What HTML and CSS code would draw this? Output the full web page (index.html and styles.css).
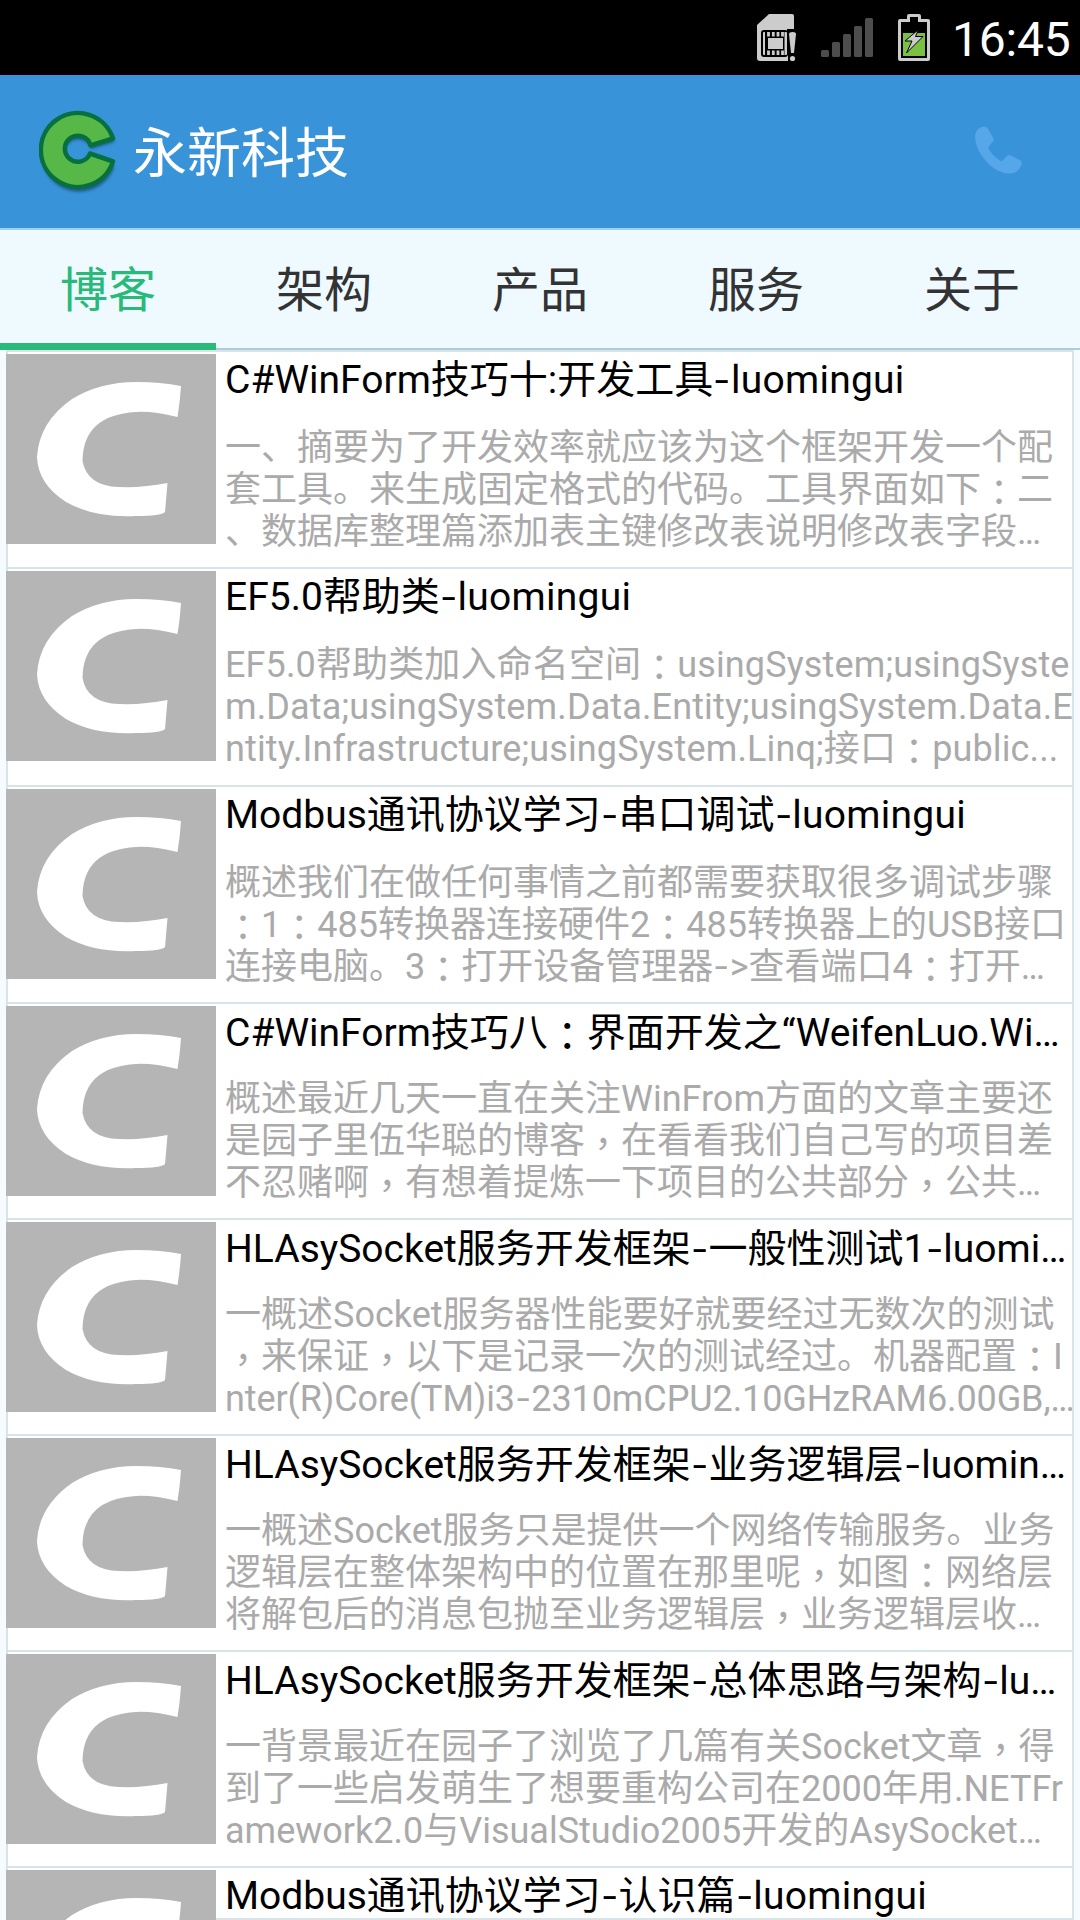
FILE: index.html
```html
<!DOCTYPE html>
<html lang="zh-CN">
<head>
<meta charset="utf-8">
<title>永新科技</title>
<link rel="stylesheet" href="styles.css">
</head>
<body>
<svg width="0" height="0" class="defs" aria-hidden="true">
  <symbol id="thumb" viewBox="0 0 210 190">
    <rect width="210" height="190" fill="#b5b5b5"/>
    <path fill="#fff" d="M175 32Q174 48 171.500 63Q147 57 130 58Q77 61 76.500 107Q81 132 113 133Q136 134 161.500 129L159 158Q155 162 130 162Q88 164 60 148Q32 130 31 103Q33 68 66 45Q94 28 130 28Q155 28 175 32Z"/>
  </symbol>
</svg>

<div class="statusbar">
  <svg class="sim" viewBox="0 0 40 48">
    <path fill="#ccc" d="M12 0H35Q37 0 37 2V47H3Q0 47 0 44V11Z"/>
    <rect x="4" y="16" width="27" height="27" rx="3" fill="#000"/>
    <rect x="6" y="18" width="24" height="23" rx="1" fill="#ccc"/>
    <rect x="8" y="18" width="19.500" height="23" fill="#000"/>
    <path stroke="#ccc" stroke-width="2.800" d="M11.500 18v4.500M16.300 18v4.500M21 18v4.500M25.500 18v4.500M11.500 36.500V41M16.300 36.500V41M21 36.500V41M25.500 36.500V41"/>
    <rect x="11" y="24" width="15" height="11" fill="#ccc"/>
    <path fill="#000" d="M30 15H40V48H31V41L30 22Z"/>
    <path fill="#ccc" d="M32 20q0-2 3.500-2t3.500 2l-2 19h-3z"/>
    <circle cx="35.500" cy="44.500" r="2.600" fill="#ccc"/>
  </svg>
  <svg class="signal" viewBox="0 0 52 40" fill="#4d4d4d">
    <rect x="0" y="32" width="8" height="7" rx="1.500"/><rect x="11" y="24" width="8" height="15" rx="1.500"/><rect x="22" y="16" width="8" height="23" rx="1.500"/><rect x="33" y="8" width="8" height="31" rx="1.500"/><rect x="44" y="0" width="8" height="39" rx="1.500"/>
  </svg>
  <svg class="battery" viewBox="0 0 32 47">
    <path fill="#ccc" d="M11 0H21Q23 0 23 2V5H30Q32 5 32 7V45Q32 47 30 47H2Q0 47 0 45V7Q0 5 2 5H9V2Q9 0 11 0Z"/>
    <path fill="#000" d="M12 3H20V8H29V44H3V8H12Z"/>
    <rect x="5" y="19" width="22" height="23" fill="#7ac143"/>
    <path fill="#ccc" stroke="#000" stroke-width="1" d="M20.500 15.500L7 27H14L8.500 39L25 22.500H17.500Z"/>
  </svg>
  <span class="clock">16:45</span>
</div>

<header class="header">
  <svg class="logo" viewBox="0 0 84 88">
    <path class="shadow" d="M75.500 31A37.500 37.500 0 1 0 75.500 55.500L52 46A13.500 13.500 0 1 1 52 38Z"/>
    <path fill="#57b847" stroke="#07703f" stroke-width="4.500" stroke-linejoin="round" d="M74 29.500A37 37 0 1 0 74 52.500L51 44.500A13 13 0 1 1 51.500 36.500Z"/>
  </svg>
  <h1>永新科技</h1>
  <svg class="phone" viewBox="0 0 47 48"><path fill="#56a7ea" d="M6.500 1Q10-.5 12.500 2L18.500 12.500Q19 14 18 15.500L13 21.500Q17 30 26.500 35.500L32 30Q33.500 28.500 35 29L45.500 34.500Q47.500 36 46.500 39Q43 48 34 47.500Q20 47 8 31.500Q-1 19.500 .3 8.500Q1.500 3 6.500 1Z"/></svg>
</header>

<nav class="tabs">
  <a class="tab active">博客</a><a class="tab">架构</a><a class="tab">产品</a><a class="tab">服务</a><a class="tab">关于</a>
</nav>

<main class="list">
  <article class="row h217">
    <svg class="thumb"><use href="#thumb"/></svg>
    <div class="text"><h2>C#WinForm技巧十:开发工具<b>-</b><em>luomingui</em></h2>
    <p><span>一、摘要为了开发效率就应该为这个框架开发一个配</span><span>套工具。来生成固定格式的代码。工具界面如下<i lang="zh-Hant">：</i>二</span><span>、数据库整理篇添加表主键修改表说明修改表字段…</span></p></div>
  </article>
  <article class="row h218">
    <svg class="thumb"><use href="#thumb"/></svg>
    <div class="text"><h2>EF5.0帮助类<b>-</b><em>luomingui</em></h2>
    <p class="latin"><span>EF5.0帮助类加入命名空间<i lang="zh-Hant">：</i>usingSystem;usingSyste</span><span>m.Data;usingSystem.Data.Entity;usingSystem.Data.E</span><span>ntity.Infrastructure;usingSystem.Linq;接口<i lang="zh-Hant">：</i>public...</span></p></div>
  </article>
  <article class="row h217">
    <svg class="thumb"><use href="#thumb"/></svg>
    <div class="text"><h2>Modbus通讯协议学习<b>-</b>串口调试<b>-</b><em>luomingui</em></h2>
    <p><span>概述我们在做任何事情之前都需要获取很多调试步骤</span><span><i lang="zh-Hant">：</i>1<i lang="zh-Hant">：</i>485转换器连接硬件2<i lang="zh-Hant">：</i>485转换器上的USB接口</span><span>连接电脑。3<i lang="zh-Hant">：</i>打开设备管理器<b>-</b>&gt;查看端口4<i lang="zh-Hant">：</i>打开…</span></p></div>
  </article>
  <article class="row">
    <svg class="thumb"><use href="#thumb"/></svg>
    <div class="text"><h2>C#WinForm技巧八<i lang="zh-Hant">：</i>界面开发之“WeifenLuo.Wi…</h2>
    <p><span>概述最近几天一直在关注WinFrom方面的文章主要还</span><span>是园子里伍华聪的博客<i lang="zh-Hant">，</i>在看看我们自己写的项目差</span><span>不忍赌啊<i lang="zh-Hant">，</i>有想着提炼一下项目的公共部分<i lang="zh-Hant">，</i>公共…</span></p></div>
  </article>
  <article class="row">
    <svg class="thumb"><use href="#thumb"/></svg>
    <div class="text"><h2>HLAsySocket服务开发框架<b>-</b>一般性测试1<b>-</b>luomi…</h2>
    <p><span>一概述Socket服务器性能要好就要经过无数次的测试</span><span><i lang="zh-Hant">，</i>来保证<i lang="zh-Hant">，</i>以下是记录一次的测试经过。机器配置<i lang="zh-Hant">：</i>I</span><span class="tight">nter(R)Core(TM)i3<b>-</b>2310mCPU2.10GHzRAM6.00GB,…</span></p></div>
  </article>
  <article class="row">
    <svg class="thumb"><use href="#thumb"/></svg>
    <div class="text"><h2>HLAsySocket服务开发框架<b>-</b>业务逻辑层<b>-</b>luomin…</h2>
    <p><span>一概述Socket服务只是提供一个网络传输服务。业务</span><span>逻辑层在整体架构中的位置在那里呢<i lang="zh-Hant">，</i>如图<i lang="zh-Hant">：</i>网络层</span><span>将解包后的消息包抛至业务逻辑层<i lang="zh-Hant">，</i>业务逻辑层收…</span></p></div>
  </article>
  <article class="row">
    <svg class="thumb"><use href="#thumb"/></svg>
    <div class="text"><h2>HLAsySocket服务开发框架<b>-</b>总体思路与架构<b>-</b>lu…</h2>
    <p><span>一背景最近在园子了浏览了几篇有关Socket文章<i lang="zh-Hant">，</i>得</span><span>到了一些启发萌生了想要重构公司在2000年用.NETFr</span><span>amework2.0与VisualStudio2005开发的AsySocket…</span></p></div>
  </article>
  <article class="row last">
    <svg class="thumb"><use href="#thumb"/></svg>
    <div class="text"><h2>Modbus通讯协议学习<b>-</b>认识篇<b>-</b><em>luomingui</em></h2></div>
  </article>
</main>
</body>
</html>
```
FILE: styles.css
```css
* { box-sizing: border-box; margin: 0; padding: 0; }
html, body { width: 1080px; height: 1920px; overflow: hidden; }
body {
  display: flex;
  flex-direction: column;
  background: #f5fbfe;
  font-family: Roboto, "Noto Sans CJK SC", sans-serif;
  color: #000;
}
svg { display: block; flex: none; }
.defs { position: absolute; }
h1, h2 { font-weight: 400; }
/* full-width punctuation centred in its cell */
i {
  font-style: normal;
  font-family: "Noto Sans CJK TC", sans-serif;
  line-height: 1;
  vertical-align: -.1em;
}
em { font-style: normal; letter-spacing: .25px; }
/* wide hyphen */
b {
  display: inline-block;
  width: .455em;
  font-weight: 400;
  line-height: 1;
  text-align: center;
  transform: scaleX(1.3);
}

.statusbar {
  flex: none;
  height: 75px;
  background: #000;
  display: flex;
  align-items: flex-start;
  padding: 14px 10px 0 757px;
}
.sim { width: 40px; height: 48px; }
.signal { width: 52px; height: 40px; margin: 4px 0 0 24px; }
.battery { width: 32px; height: 47px; margin-left: 25px; }
.clock {
  margin-left: 22px;
  color: #fff;
  font-size: 48px;
  letter-spacing: -.2px;
  line-height: 52px;
  white-space: nowrap;
}

.header {
  flex: none;
  height: 155px;
  background: #3893d8;
  border-bottom: 2px solid #a3d0f0;
  display: flex;
  align-items: center;
  padding: 0 58px 0 39px;
}
.logo { width: 84px; height: 88px; margin-top: 2px; }
.logo .shadow { fill: #174a72; opacity: .75; filter: blur(1.500px); transform: translate(0, 2px); }
.header h1 { flex: 1; margin-left: 10px; padding-top: 6px; font-size: 54px; line-height: 80px; color: #fff; }
.phone { width: 47px; height: 48px; margin-bottom: 4px; }

.tabs {
  flex: none;
  height: 120px;
  display: flex;
  background: #eefaff;
}
.tab {
  flex: 1;
  padding-top: 4px;
  font-size: 48px;
  line-height: 113px;
  text-align: center;
  color: #333;
  border-bottom: 2px solid #adcdd8;
}
.tab.active { color: #29b978; border-bottom: 7px solid #29b978; }

.list {
  flex: 1;
  width: 1068px;
  margin-left: 6px;
  border-top: 2px solid #d7e4e9;
  overflow: hidden;
}
.row {
  height: 216px;
  display: flex;
  align-items: flex-start;
  background: #fff;
  border: 2px solid #d7e4e9;
  border-top: 0;
}
.row.h217 { height: 217px; }
.row.h218 { height: 218px; }
.row.last { height: 52px; }
.thumb { width: 210px; height: 190px; margin: 2px 0 0 -2px; }
.text { flex: 1; min-width: 0; padding-left: 9px; overflow: hidden; white-space: nowrap; }
.text h2 { height: 46px; font-size: 39px; line-height: 46px; margin-top: 6px; }
.text p { margin-top: 22px; font-size: 36px; line-height: 42px; color: #aaa; }
.text span { display: block; height: 42px; }
.h217 h2, .h218 h2 { margin-top: 5px; }
.last .text h2 { height: 45px; margin-top: 5px; }
.h217 p, .h218 p { margin-top: 24px; }
.latin { letter-spacing: .13px; }
.tight { letter-spacing: -.1px; }
```
